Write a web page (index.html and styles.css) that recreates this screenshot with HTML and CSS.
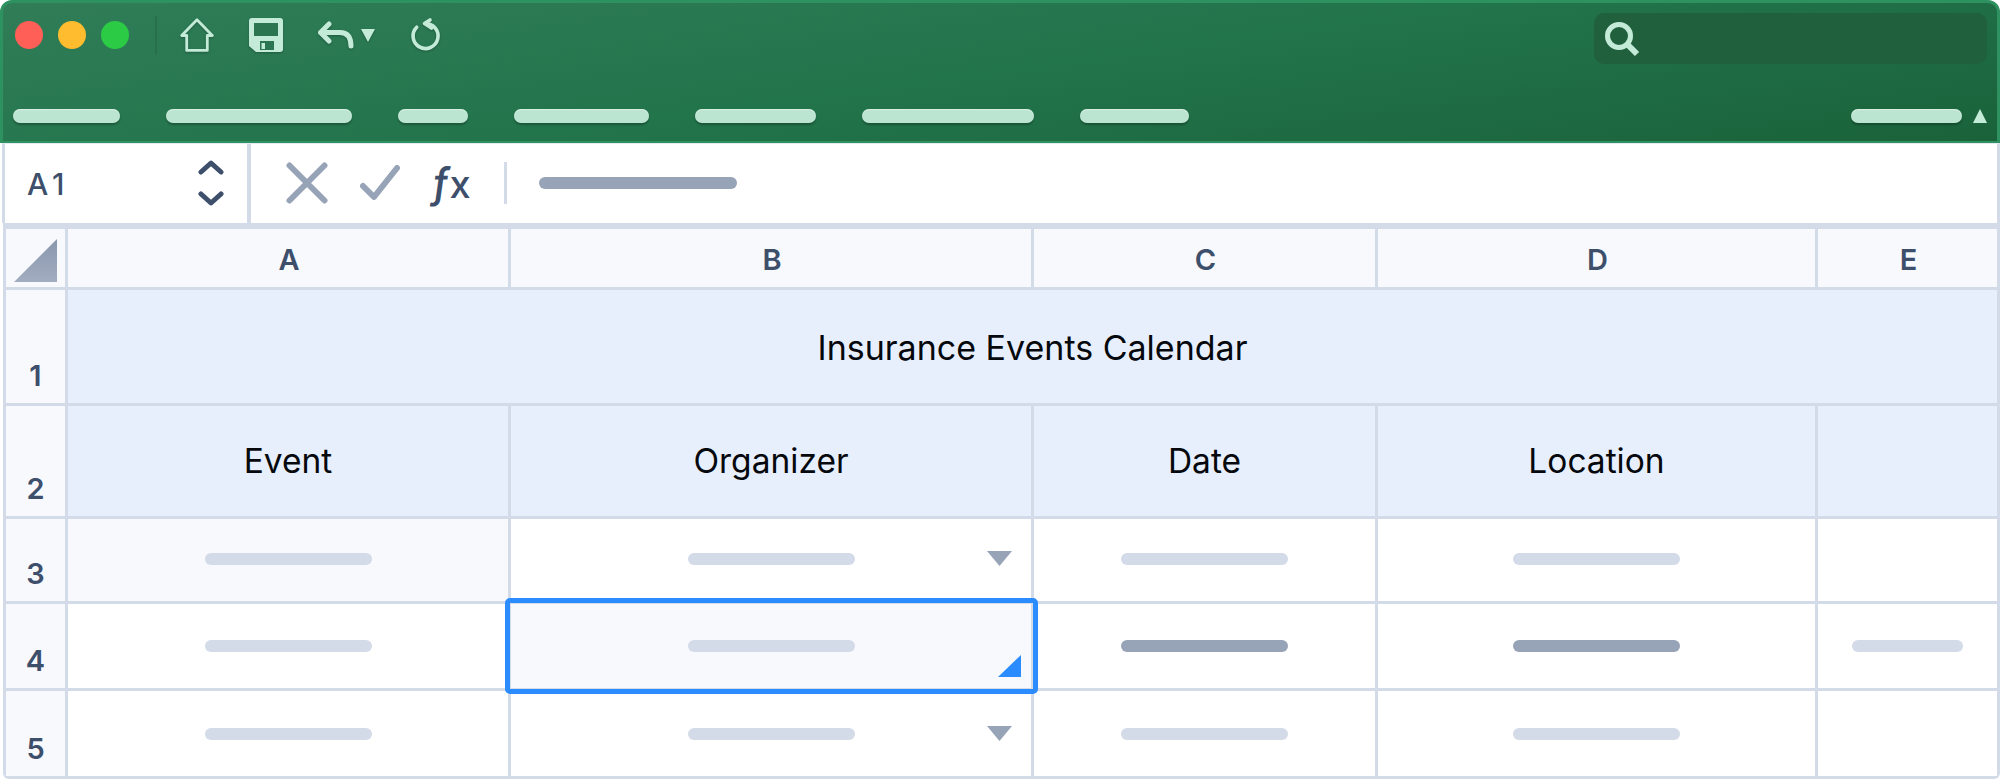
FILE: index.html
```html
<!DOCTYPE html>
<html lang="en">
<head>
  <meta charset="UTF-8">
  <title>Insurance Events Calendar</title>
  <link rel="stylesheet" href="styles.css">
</head>
<body>
  <!-- Green window toolbar -->
  <header class="toolbar">
    <div class="toolbar-top">
      <div class="quick-tools">
        <span class="light light-red"></span>
        <span class="light light-yellow"></span>
        <span class="light light-green"></span>
        <span class="tool-sep"></span>
        <svg class="tool-icon icon-home" width="34" height="34" viewBox="0 0 34 34">
          <path d="M17 1.8 L32.3 17.5 H27.3 V32.4 H6.7 V17.5 H1.7 Z" fill="none" stroke="#c4ead8" stroke-width="2.8" stroke-linejoin="round"/>
        </svg>
        <svg class="tool-icon icon-save" width="34" height="34" viewBox="0 0 34 34">
          <path d="M3 0 H31 Q34 0 34 3 V31 Q34 34 31 34 H7 L0 28 V3 Q0 0 3 0 Z" fill="#c4ead8"/>
          <rect x="5" y="5" width="24" height="13" fill="#2b7550"/>
          <rect x="11" y="23" width="14" height="9" fill="#2b7550"/>
          <rect x="12.5" y="25" width="3.5" height="6" fill="#c4ead8"/>
        </svg>
        <svg class="tool-icon icon-undo" width="36" height="28" viewBox="0 0 36 28">
          <path d="M11 3 L2.5 11.5 L11 20 M2.5 11.5 H22 Q33 11.5 33 25" fill="none" stroke="#c4ead8" stroke-width="5" stroke-linecap="round" stroke-linejoin="round"/>
        </svg>
        <svg class="tool-icon icon-caret" width="14" height="13" viewBox="0 0 14 13">
          <path d="M0 0 H14 L7 13 Z" fill="#c4ead8"/>
        </svg>
        <svg class="tool-icon icon-redo" width="34" height="37" viewBox="0 0 34 37">
          <path d="M16.5 6.5 A12.5 12.5 0 1 1 7.7 10.2" fill="none" stroke="#c4ead8" stroke-width="3.6" stroke-linecap="round"/>
          <path d="M21 3 L15.5 6.5 L22.5 11" fill="none" stroke="#c4ead8" stroke-width="3.6" stroke-linecap="round" stroke-linejoin="round"/>
        </svg>
      </div>
      <div class="search">
        <svg width="36" height="36" viewBox="0 0 36 36">
          <circle cx="15" cy="15" r="11.5" fill="none" stroke="#c4ead8" stroke-width="5"/>
          <path d="M24 24 L33 33" stroke="#c4ead8" stroke-width="6"/>
        </svg>
      </div>
    </div>
    <div class="toolbar-tabs">
      <span class="tab"></span>
      <span class="tab"></span>
      <span class="tab"></span>
      <span class="tab"></span>
      <span class="tab"></span>
      <span class="tab"></span>
      <span class="tab"></span>
      <span class="tab tab-last"></span>
      <svg class="collapse" width="14" height="14" viewBox="0 0 14 14">
        <path d="M7 0 L14 14 H0 Z" fill="#c4ead8"/>
      </svg>
    </div>
  </header>

  <!-- Formula bar -->
  <section class="formula-bar">
    <div class="name-box">
      <span class="cell-name">A1</span>
      <svg width="26" height="48" viewBox="0 0 26 48">
        <path d="M3 13 L13 4 L23 13 M3 35 L13 44 L23 35" fill="none" stroke="#3d4f6b" stroke-width="5" stroke-linecap="round" stroke-linejoin="round"/>
      </svg>
    </div>
    <div class="formula">
      <svg width="42" height="42" viewBox="0 0 42 42">
        <path d="M3.5 3.5 L38.5 38.5 M38.5 3.5 L3.5 38.5" stroke="#97a3b6" stroke-width="6" stroke-linecap="round"/>
      </svg>
      <svg width="40" height="36" viewBox="0 0 40 36">
        <path d="M3 21 L14 32 L37 3" fill="none" stroke="#97a3b6" stroke-width="6" stroke-linecap="round" stroke-linejoin="round"/>
      </svg>
      <span class="fx"><span class="fx-f">ƒ</span>x</span>
      <span class="formula-sep"></span>
      <span class="bar bar-formula"></span>
    </div>
  </section>

  <!-- Sheet -->
  <main class="sheet">
    <div class="head corner"><span class="corner-mark"></span></div>
    <div class="head col">A</div>
    <div class="head col">B</div>
    <div class="head col">C</div>
    <div class="head col">D</div>
    <div class="head col">E</div>

    <div class="head row-num">1</div>
    <div class="cell shaded title">Insurance Events Calendar</div>

    <div class="head row-num">2</div>
    <div class="cell shaded">Event</div>
    <div class="cell shaded">Organizer</div>
    <div class="cell shaded">Date</div>
    <div class="cell shaded">Location</div>
    <div class="cell shaded"></div>

    <div class="head row-num">3</div>
    <div class="cell light-cell"><span class="bar bar-up"></span></div>
    <div class="cell"><span class="bar bar-up"></span><span class="dropdown"></span></div>
    <div class="cell"><span class="bar bar-up"></span></div>
    <div class="cell"><span class="bar bar-up"></span></div>
    <div class="cell"></div>

    <div class="head row-num">4</div>
    <div class="cell"><span class="bar"></span></div>
    <div class="cell light-cell selected"><span class="bar"></span><span class="selection"></span><span class="fill-handle"></span></div>
    <div class="cell"><span class="bar bar-dark"></span></div>
    <div class="cell"><span class="bar bar-dark"></span></div>
    <div class="cell"><span class="bar bar-short"></span></div>

    <div class="head row-num">5</div>
    <div class="cell"><span class="bar"></span></div>
    <div class="cell"><span class="bar"></span><span class="dropdown"></span></div>
    <div class="cell"><span class="bar"></span></div>
    <div class="cell"><span class="bar"></span></div>
    <div class="cell"></div>
  </main>
</body>
</html>
```

FILE: styles.css
```css
/* General Reset */
* {
  margin: 0;
  padding: 0;
  box-sizing: border-box;
}

body {
  width: 2000px;
  height: 779px;
  overflow: hidden;
  background-color: #ffffff;
  font-family: 'Inter', 'Liberation Sans', sans-serif;
}

/* Toolbar */
.toolbar {
  height: 143px;
  border: 3px solid #2e9160;
  border-bottom-width: 2px;
  border-radius: 12px 12px 0 0;
  background: linear-gradient(172deg, #307d58, #22744b 50%, #1a623a);
}

.toolbar-top {
  display: flex;
  justify-content: space-between;
  align-items: flex-start;
  padding: 10px 10px 0 12px;
}

.quick-tools {
  display: flex;
  align-items: center;
  height: 44px;
}

.light {
  width: 28px;
  height: 28px;
  border-radius: 50%;
  margin-right: 15px;
}

.light-red { background-color: #ff5f57; }
.light-yellow { background-color: #febc2e; }
.light-green { background-color: #2ccb45; }

.tool-sep {
  width: 2px;
  height: 39px;
  margin-left: 11px;
  background-color: #2a6f4b;
}

.tool-icon {
  filter: drop-shadow(0 1px 1px rgba(0, 0, 0, 0.25));
}

.icon-home { margin-left: 23px; }
.icon-save { margin-left: 35px; }
.icon-undo { margin-left: 35px; }
.icon-caret { margin-left: 7px; }
.icon-redo { margin-left: 34px; }

.search {
  display: flex;
  align-items: center;
  width: 393px;
  height: 51px;
  padding-left: 10px;
  border-radius: 10px;
  background-color: #20603d;
}

.toolbar-tabs {
  display: flex;
  align-items: center;
  gap: 46px;
  margin-top: 45px;
  padding-left: 10px;
}

.tab {
  height: 14px;
  border-radius: 7px;
  background: #bce5d1;
  box-shadow: inset 0 1px 1px rgba(255, 255, 255, 0.45), 0 2px 2px rgba(0, 0, 0, 0.25);
}

.tab:nth-child(1) { width: 107px; }
.tab:nth-child(2) { width: 186px; }
.tab:nth-child(3) { width: 70px; }
.tab:nth-child(4) { width: 135px; }
.tab:nth-child(5) { width: 121px; }
.tab:nth-child(6) { width: 172px; }
.tab:nth-child(7) { width: 109px; }

.tab-last {
  width: 111px;
  margin-left: auto;
  margin-right: -35px;
}

.collapse {
  margin-right: 10px;
}

/* Formula bar */
.formula-bar {
  display: flex;
  height: 80px;
  margin-left: 2px;
  padding-bottom: 2px;
  border-top: 1px solid #e6eaf2;
  border-left: 3px solid #d3dae8;
  border-right: 3px solid #d3dae8;
  background-color: #ffffff;
}

.name-box {
  display: flex;
  justify-content: space-between;
  align-items: center;
  width: 246px;
  margin-bottom: -2px;
  padding: 0 23px 2px 22px;
  border-right: 4px solid #d3dae8;
}

.cell-name {
  margin-top: 2px;
  font-size: 30px;
  font-weight: 500;
  letter-spacing: 5px;
  color: #3d4f6b;
}

.formula {
  display: flex;
  align-items: center;
  gap: 32px;
  padding-left: 35px;
}

.fx {
  width: 40px;
  font-size: 38px;
  font-weight: 500;
  line-height: 1;
  white-space: nowrap;
  color: #3d4f6b;
}

.fx-f {
  display: inline-block;
  font-size: 42px;
  transform: skewX(-8deg);
}

.formula-sep {
  width: 3px;
  height: 42px;
  background-color: #d3dae8;
}

/* Sheet */
.sheet {
  display: grid;
  grid-template-columns: 59px 440px 520px 341px 437px 179px;
  grid-template-rows: 58px 113px 110px 82px 84px 85px;
  gap: 3px;
  width: 1997px;
  margin-left: 3px;
  padding: 6px 3px 3px;
  border-radius: 0 0 6px 6px;
  background-color: #d3dae8;
}

.head {
  display: flex;
  justify-content: center;
  background-color: #f8f9fd;
  font-size: 29px;
  font-weight: 600;
  color: #3d4f6b;
}

.col {
  align-items: center;
  padding: 2px 0 0 2px;
}

.row-num {
  align-items: flex-end;
  padding-bottom: 10px;
  line-height: 34px;
}

.corner {
  align-items: flex-end;
  justify-content: flex-end;
  padding: 0 8px 5px 0;
}

.corner-mark {
  width: 43px;
  height: 43px;
  background: linear-gradient(180deg, #8996ad, #a2adc0);
  clip-path: polygon(100% 0, 100% 100%, 0 100%);
}

.cell {
  position: relative;
  display: flex;
  justify-content: center;
  align-items: center;
  background-color: #ffffff;
  font-size: 33.5px;
  color: #05080c;
}

.shaded { background-color: #e8effc; }
.light-cell { background-color: #f8f9fd; }

.title {
  grid-column: 2 / -1;
  padding-top: 2px;
  font-size: 34px;
}

.selected {
  z-index: 2;
}

/* Placeholder text */
.bar {
  display: block;
  width: 167px;
  height: 12px;
  border-radius: 6px;
  background-color: #d3dae8;
}

.bar-up { margin-bottom: 3px; }
.bar-short { width: 111px; }
.bar-dark { background-color: #97a3b6; }

.bar-formula {
  width: 198px;
  background-color: #97a3b6;
}

.dropdown {
  position: absolute;
  right: 19px;
  bottom: 35px;
  width: 25px;
  height: 15px;
  background-color: #97a3b6;
  clip-path: polygon(0 0, 100% 0, 50% 100%);
}

/* Selected cell */
.selection {
  position: absolute;
  inset: -6px -7px -6px -6px;
  border: 5px solid #2b8cff;
  border-radius: 5px;
}

.fill-handle {
  position: absolute;
  right: 10px;
  bottom: 11px;
  width: 23px;
  height: 22px;
  background-color: #2b8cff;
  clip-path: polygon(100% 0, 100% 100%, 0 100%);
}
```
